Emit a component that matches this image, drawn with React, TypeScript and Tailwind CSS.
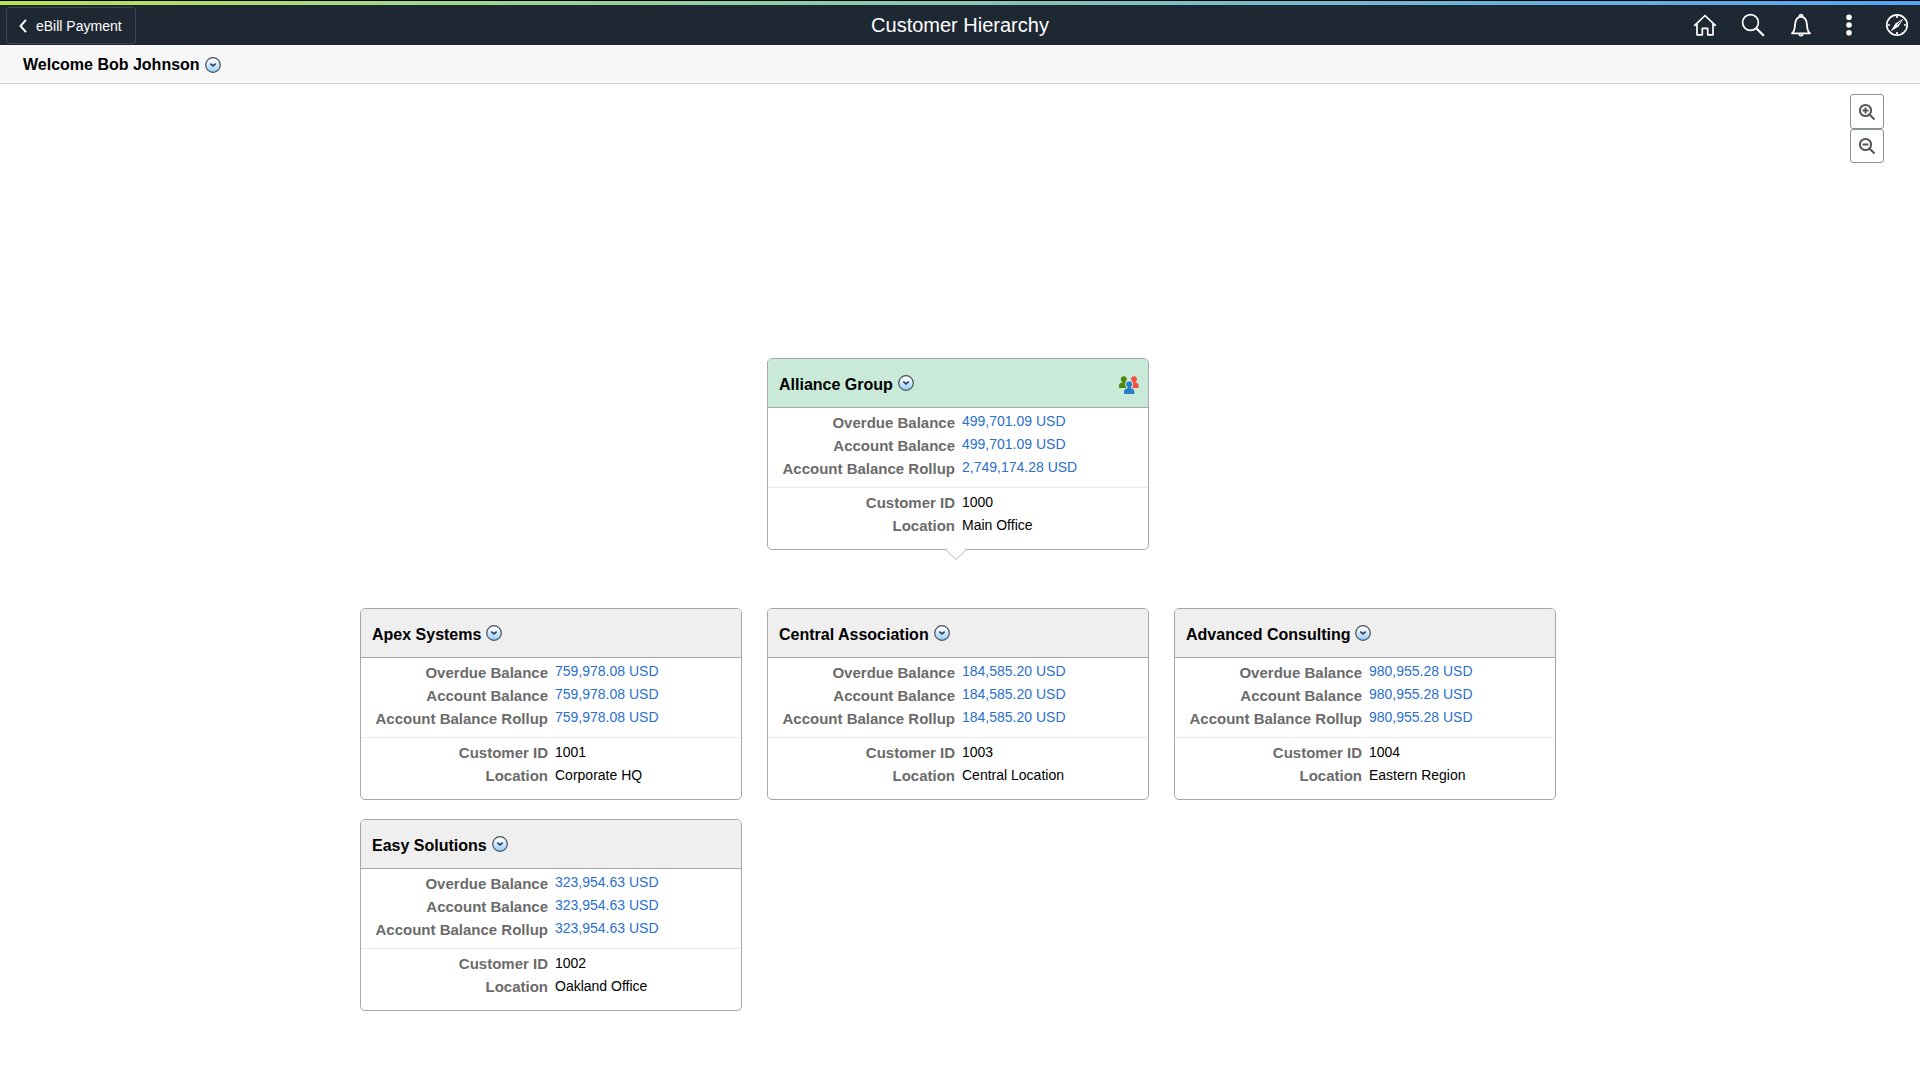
import type { ReactNode } from 'react'

interface Customer {
  id: string
  name: string
  location: string
  overdue: string
  balance: string
  rollup: string
}

const PARENT: Customer = {
  id: '1000',
  name: 'Alliance Group',
  location: 'Main Office',
  overdue: '499,701.09 USD',
  balance: '499,701.09 USD',
  rollup: '2,749,174.28 USD',
}

const CHILDREN: Customer[] = [
  {
    id: '1001',
    name: 'Apex Systems',
    location: 'Corporate HQ',
    overdue: '759,978.08 USD',
    balance: '759,978.08 USD',
    rollup: '759,978.08 USD',
  },
  {
    id: '1003',
    name: 'Central Association',
    location: 'Central Location',
    overdue: '184,585.20 USD',
    balance: '184,585.20 USD',
    rollup: '184,585.20 USD',
  },
  {
    id: '1004',
    name: 'Advanced Consulting',
    location: 'Eastern Region',
    overdue: '980,955.28 USD',
    balance: '980,955.28 USD',
    rollup: '980,955.28 USD',
  },
  {
    id: '1002',
    name: 'Easy Solutions',
    location: 'Oakland Office',
    overdue: '323,954.63 USD',
    balance: '323,954.63 USD',
    rollup: '323,954.63 USD',
  },
]

function IconButton({ label, children }: { label: string; children: ReactNode }) {
  return (
    <button type="button" aria-label={label} className="flex h-10 w-10 items-center justify-center">
      <svg
        width="24"
        height="24"
        viewBox="0 0 24 24"
        fill="none"
        stroke="currentColor"
        strokeWidth="1.7"
        strokeLinejoin="round"
        aria-hidden="true"
      >
        {children}
      </svg>
    </button>
  )
}

function ActionsButton({ label }: { label: string }) {
  return (
    <button type="button" aria-label={label} className="shrink-0">
      <svg width="16" height="16" viewBox="0 0 16 16" aria-hidden="true" className="block">
        <defs>
          <linearGradient id="actions-fill" x1="0" y1="0" x2="0" y2="1">
            <stop offset="0.2" stopColor="#f6fbff" />
            <stop offset="1" stopColor="#8ecbfb" />
          </linearGradient>
        </defs>
        <circle cx="8" cy="8" r="7.3" fill="url(#actions-fill)" stroke="#4a4f55" strokeWidth="1.2" />
        <path d="M5.300 6.600 8 8.900l2.700-2.300" fill="none" stroke="#2b3a4a" strokeWidth="1.500" />
      </svg>
    </button>
  )
}

function PeopleIcon() {
  return (
    <svg width="20" height="18" viewBox="0 0 20 18" aria-hidden="true">
      <circle cx="4.8" cy="3.2" r="2.9" fill="#4f8a10" />
      <path d="M0 12V9.6C0 7.6 1.6 7 3.2 6.6V5h3.2v1.6C8 7 9 7.8 9 9.6V12z" fill="#4f8a10" />
      <circle cx="15" cy="3.2" r="2.9" fill="#f0503c" />
      <path d="M10.500 12V9.600c0-1.800 1-2.600 2.900-3V5h3.200v1.600c1.600.4 3 1 3 3V12z" fill="#f0503c" />
      <circle cx="10.200" cy="8.200" r="3.900" fill="#d9f0f0" />
      <path d="M4.200 18v-2.500c0-2.400 1.700-3.400 4-3.900h4c2.300.5 4 1.500 4 3.900V18z" fill="#d9f0f0" />
      <circle cx="10.200" cy="8.200" r="3" fill="#2580c8" />
      <path d="M5 18v-2.500c0-2 1.500-2.700 3.600-3.200V11h3.200v1.300c2.100.5 3.600 1.200 3.600 3.200V18z" fill="#2580c8" />
    </svg>
  )
}

function MoneyRow({ label, value }: { label: string; value: string }) {
  return (
    <div className="grid h-[23px] grid-cols-[187px_1fr] gap-x-[7px]">
      <dt className="text-right text-[15px] leading-[23px] font-bold text-[#6b6b6b]">{label}</dt>
      <dd className="text-sm leading-5">
        <a href="#" className="text-[#2a6fce]">
          {value}
        </a>
      </dd>
    </div>
  )
}

function TextRow({ label, value }: { label: string; value: string }) {
  return (
    <div className="grid h-[23px] grid-cols-[187px_1fr] gap-x-[7px]">
      <dt className="text-right text-[15px] leading-[23px] font-bold text-[#6b6b6b]">{label}</dt>
      <dd className="text-sm leading-[23px] text-black">{value}</dd>
    </div>
  )
}

function CustomerCard({ customer, isParent = false }: { customer: Customer; isParent?: boolean }) {
  return (
    <section className="relative w-[382px] rounded-[5px] border border-[#a5a8ab] bg-white">
      <header
        className={`flex h-[49px] items-center justify-between rounded-t-[4px] border-b border-[#a5a8ab] pt-1 pr-[9px] pl-[11px] ${
          isParent ? 'bg-[#c9ead8]' : 'bg-[#efefef]'
        }`}
      >
        <div className="flex items-start gap-[5px]">
          <h2 className="text-base leading-5 font-bold text-black">{customer.name}</h2>
          <ActionsButton label={`Actions for ${customer.name}`} />
        </div>
        {isParent && <PeopleIcon />}
      </header>

      <dl className="border-b border-[#ebebeb] pt-[3px] pb-[7px]">
        <MoneyRow label="Overdue Balance" value={customer.overdue} />
        <MoneyRow label="Account Balance" value={customer.balance} />
        <MoneyRow label="Account Balance Rollup" value={customer.rollup} />
      </dl>
      <dl className="pt-[3px] pb-3">
        <TextRow label="Customer ID" value={customer.id} />
        <TextRow label="Location" value={customer.location} />
      </dl>

      {/* Pointer towards the child accounts */}
      {isParent && (
        <svg
          width="22"
          height="12"
          viewBox="0 0 22 12"
          aria-hidden="true"
          className="absolute top-full left-[177px] -mt-px"
        >
          <path d="M0 0h22L11 11z" fill="#fff" />
          <path d="M0 1 11 11.500 22 1" fill="none" stroke="#b4b6b8" />
        </svg>
      )}
    </section>
  )
}

export default function App() {
  return (
    <div className="min-h-screen bg-white font-['Liberation_Sans',Arial,sans-serif] text-black">
      <div className="h-[5px] border-t border-black bg-linear-to-r from-[#b8e253] to-[#55a3f5]" />
      <header className="grid h-10 grid-cols-[1fr_auto_1fr] items-center bg-[#1e2833] text-white">
        <div className="flex pl-1.5">
          <button
            type="button"
            className="flex h-[37px] items-center gap-[9px] rounded-[3px] border border-[#3d4650] pt-px pr-[13px] pl-3 text-sm"
          >
            <svg width="8" height="14" viewBox="0 0 8 14" fill="none" stroke="currentColor" strokeWidth="2" aria-hidden="true">
              <path d="M7 .8 1.500 7 7 13.200" />
            </svg>
            eBill Payment
          </button>
        </div>
        <h1 className="text-xl leading-6">Customer Hierarchy</h1>
        <nav className="flex justify-end gap-2 pr-[3px]">
          <IconButton label="Home">
            <path d="M1.200 12.800 12 2.500l10.800 10.300M4 11v10.800h5.300v-6.500h5.400v6.500H20V11" />
          </IconButton>
          <IconButton label="Search">
            <circle cx="9.500" cy="9.500" r="7.900" />
            <path d="m15 15 7.800 7.800" strokeWidth="2.200" />
          </IconButton>
          <IconButton label="Notifications">
            <path
              d="M3 20.300c2.400-1.700 2.800-4.300 3-8.300.2-4.700 1.800-7.800 6-8.300 4.200.5 5.800 3.600 6 8.300.2 4 .6 6.600 3 8.300z"
              strokeWidth="1.800"
            />
            <path d="M10.300 3.500c0-2.500 3.400-2.500 3.400 0M10 21.300c.5 1.800 3.500 1.800 4 0" />
          </IconButton>
          <IconButton label="More actions">
            <g fill="currentColor" stroke="none">
              <circle cx="12" cy="4.200" r="2.800" />
              <circle cx="12" cy="12" r="2.800" />
              <circle cx="12" cy="19.800" r="2.800" />
            </g>
          </IconButton>
          <IconButton label="NavBar">
            <circle cx="12" cy="12" r="10.200" />
            <path d="m18.500 5.500-5 8-8 5 5-8z" fill="currentColor" stroke="none" />
            <path d="m12.300 11.700 3.200-3.200" stroke="#1e2833" strokeWidth="1" />
            <path d="M12 3v2M12 19v2M3 12h2M19 12h2" />
          </IconButton>
        </nav>
      </header>

      <div className="flex h-[39px] items-center gap-[5px] border-b border-[#d3d3d3] bg-[#f7f7f7] pt-0.5 pl-[23px]">
        <p className="text-base leading-5 font-bold">Welcome Bob Johnson</p>
        <ActionsButton label="Customer actions" />
      </div>

      <main>
        <div className="flex flex-col items-end pt-2.5 pr-9">
          <button
            type="button"
            aria-label="Zoom in"
            className="flex h-[35px] w-[34px] items-center justify-center rounded-[3px] border border-[#8a9096]"
          >
            <svg width="18" height="18" viewBox="0 0 18 18" fill="none" stroke="#555" strokeWidth="2" aria-hidden="true">
              <circle cx="7.500" cy="7.500" r="5.600" />
              <path d="m11.500 11.500 5 5M7.500 4.500v6M4.500 7.500h6" />
            </svg>
          </button>
          <button
            type="button"
            aria-label="Zoom out"
            className="flex h-[34px] w-[34px] items-center justify-center rounded-[3px] border border-[#8a9096]"
          >
            <svg width="18" height="18" viewBox="0 0 18 18" fill="none" stroke="#555" strokeWidth="2" aria-hidden="true">
              <circle cx="7.500" cy="7.500" r="5.600" />
              <path d="m11.500 11.500 5 5M4.500 7.500h6" />
            </svg>
          </button>
        </div>

        <div className="flex flex-col items-center pt-[195px] pr-1 pb-16">
          <CustomerCard customer={PARENT} isParent />
          <div className="mt-[58px] grid grid-cols-3 gap-x-[25px] gap-y-[19px]">
            {CHILDREN.map((customer) => (
              <CustomerCard key={customer.id} customer={customer} />
            ))}
          </div>
        </div>
      </main>
    </div>
  )
}
